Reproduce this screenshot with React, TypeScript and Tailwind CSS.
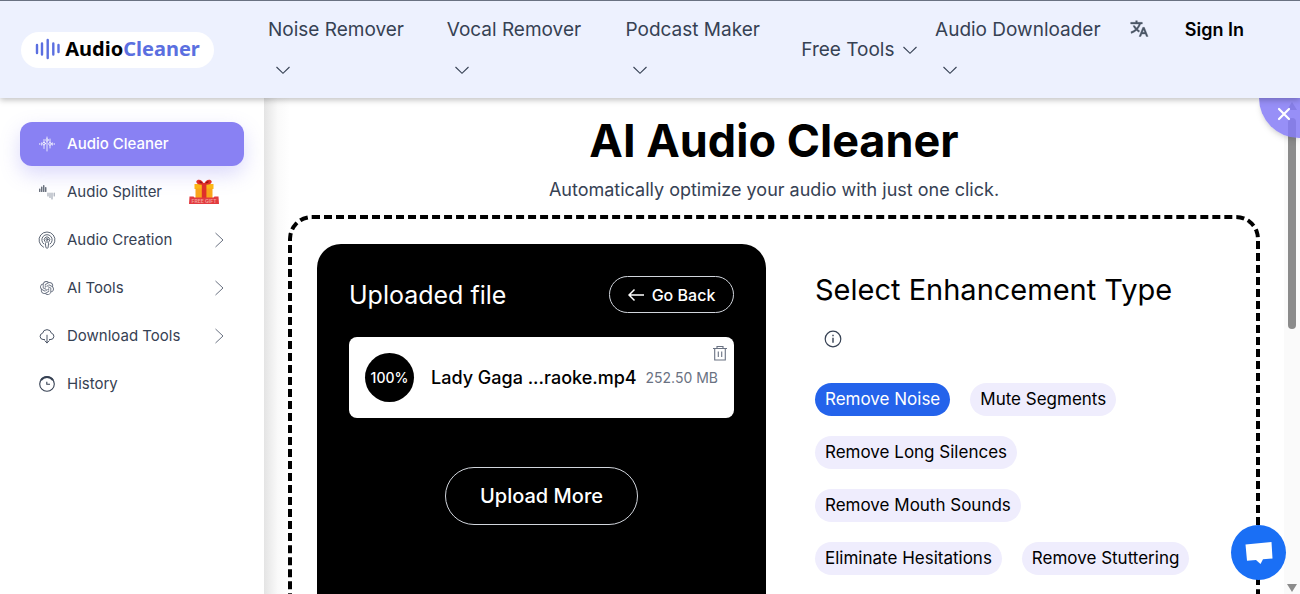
import React, { useState } from 'react';
import { RiTranslate2 } from 'react-icons/ri';
import { SiOpenai } from 'react-icons/si';

const navItems = [
  { label: 'Noise Remover', wrap: true },
  { label: 'Vocal Remover', wrap: true },
  { label: 'Podcast Maker', wrap: true },
  { label: 'Free Tools', wrap: false },
  { label: 'Audio Downloader', wrap: true },
];

const enhancementTypes = [
  'Remove Noise',
  'Mute Segments',
  'Remove Long Silences',
  'Remove Mouth Sounds',
  'Eliminate Hesitations',
  'Remove Stuttering',
];

const ChevronDown = () => (
  <svg className="w-4 h-4" viewBox="0 0 16 16" fill="none" stroke="currentColor" strokeWidth="1.1">
    <path d="M1.5 5 8 11.3 14.5 5" />
  </svg>
);

const ChevronRight = () => (
  <svg className="w-4 h-4 text-gray-500" viewBox="0 0 16 16" fill="none" stroke="currentColor" strokeWidth="1">
    <path d="M3.5 1 11 8 3.5 15" />
  </svg>
);

const LogoWave = () => (
  <svg className="w-[26px] h-6" viewBox="0 0 26 24" fill="none" stroke="#5b6fe0" strokeWidth="2.4" strokeLinecap="round">
    <path d="M2 8v8M7 6.5v11M12.7 3v18M18.3 6.5v11M23.5 8v7" />
  </svg>
);

const CleanerIcon = () => (
  <svg className="w-4 h-4" viewBox="0 0 16 16" fill="none" stroke="currentColor" strokeWidth="0.8" strokeLinecap="round">
    <path d="M.8 7.5v1M2.7 6.8v2.4M5 3.5v2.7M5 9v3.5M8 1v1.8M8 5.2V15M11 3v3.5M11 9.3v2.7M13.3 6.8v2.4M15.2 7.5v1" />
    <circle cx="5" cy="7.6" r="1.3" />
    <circle cx="8" cy="4" r="1.2" />
    <circle cx="11" cy="7.9" r="1.3" />
  </svg>
);

const SplitterIcon = () => (
  <svg className="w-4 h-4" viewBox="0 0 16 16" fill="none" strokeLinecap="round">
    <path d="M.8 5v2.5M2.8 3v4.5M4.8 1.5v6M6.8 3.5v4" stroke="#374151" strokeWidth="1.1" />
    <path d="M9 9v3M11 9v4.5M13 9v6M15.2 9v3" stroke="#9ca3af" strokeWidth="1.1" />
  </svg>
);

const CreationIcon = () => (
  <svg className="w-[18px] h-[18px]" viewBox="0 0 18 18" fill="none" stroke="currentColor" strokeWidth="0.8" strokeLinecap="round">
    <path d="M5.5 16.2a8 8 0 1 1 7 0" />
    <path d="M5.8 13a5.2 5.2 0 1 1 6.4 0" />
    <path d="M6.9 10.6a2.8 2.8 0 1 1 4.2 0" />
    <circle cx="9" cy="8.5" r="1" />
    <path d="M7.4 12.2c0-1.8 3.2-1.8 3.2 0l-.5 4.3c-.2 1.1-2 1.1-2.2 0z" />
  </svg>
);

const CloudIcon = () => (
  <svg className="w-4 h-4" viewBox="0 0 16 16" fill="none" stroke="currentColor" strokeWidth="0.9" strokeLinecap="round" strokeLinejoin="round">
    <path d="M5.5 11.5H4a3.2 3.2 0 0 1-.4-6.3 4.5 4.5 0 0 1 8.8 0 3.2 3.2 0 0 1-.4 6.3h-1.5" />
    <path d="M8 7.2v7.6M5.8 12.7 8 14.9l2.2-2.2" />
  </svg>
);

const HistoryIcon = () => (
  <svg className="w-4 h-4" viewBox="0 0 16 16" fill="none" stroke="currentColor" strokeWidth="1.1">
    <circle cx="8" cy="8" r="7.3" />
    <path d="M2 4.2a7.2 7.2 0 0 1 12 0" strokeWidth="1.9" />
    <path d="M7.8 5.8V8.2h3.2" />
  </svg>
);

const GiftIcon = () => (
  <svg className="w-[32px] h-[26px]" viewBox="0 0 32 26">
    <path d="M6.5 5h19v5h-19z" fill="#fbb615" />
    <path d="M7.5 9.5h17V20h-17z" fill="#f9a51a" />
    <path d="M13.8 4h4.6v16h-4.6z" fill="#df2f2a" />
    <path d="M16 5.5C12 6.5 8 5 8.3 2.5 9-.5 15 0 16 5.5zM16 5.5c4 1 8-.5 7.7-3C23-.5 17 0 16 5.5z" fill="#df2f2a" />
    <path d="M14.5 4.3c-2 0-3.5-.8-3.2-1.6.5-.9 2.6 0 3.2 1.6zM17.5 4.3c2 0 3.5-.8 3.2-1.6-.5-.9-2.6 0-3.2 1.6z" fill="#8f1414" />
    <path d="M1.5 17.5h4l1 1h19l1-1h4l.5 7.5H1z" fill="#e23a3f" />
    <text x="16" y="23.7" textAnchor="middle" fontSize="5" fontWeight="600" fill="#f3a39c" fontFamily="Inter, sans-serif">FREE GIFT</text>
  </svg>
);

const TrashIcon = () => (
  <svg className="w-4 h-4" viewBox="0 0 16 16" fill="none" stroke="currentColor" strokeWidth="1.1">
    <path d="M1 3.5h14M5 3.5v-2h6v2M2.7 3.5v11.5h10.6V3.5M6.3 6.5v5.5M9.7 6.5v5.5" />
  </svg>
);

const sidebarItems = [
  { label: 'Audio Cleaner', icon: <CleanerIcon /> },
  { label: 'Audio Splitter', icon: <SplitterIcon />, gift: true },
  { label: 'Audio Creation', icon: <CreationIcon />, expandable: true },
  { label: 'AI Tools', icon: <SiOpenai className="w-[14px] h-[14px] text-gray-500" />, expandable: true },
  { label: 'Download Tools', icon: <CloudIcon />, expandable: true },
  { label: 'History', icon: <HistoryIcon /> },
];

const Header = () => (
  <header className="relative z-20 flex h-[98px] shrink-0 items-center border-t border-gray-500 bg-[#edf1fe] pl-[21px] shadow-[0_2px_6px_rgba(0,0,0,0.25)]">
    <a href="#" className="flex h-9 w-[193px] shrink-0 items-center justify-center gap-1 rounded-full bg-white pb-[2px] font-['Noto_Sans'] text-xl font-bold text-black">
      <LogoWave />
      <span>
        Audio<span className="text-[#5b6fe0]">Cleaner</span>
      </span>
    </a>
    <nav className="ml-[54px] grid flex-1 grid-cols-[179fr_179fr_176fr_134fr_194fr] items-center text-[19px] text-gray-700">
      {navItems.map((item) => (
        <button
          key={item.label}
          className={item.wrap ? 'flex flex-col items-start' : 'flex items-center gap-2'}
        >
          <span className="leading-[41px] whitespace-nowrap">{item.label}</span>
          <span className={item.wrap ? 'flex h-[41px] items-center pl-[7px]' : ''}>
            <ChevronDown />
          </span>
        </button>
      ))}
    </nav>
    <div className="flex h-[82px] items-start pr-14">
      <button aria-label="Language" className="flex h-[41px] w-14 items-center text-gray-600">
        <RiTranslate2 className="h-5 w-5" stroke="currentColor" strokeWidth="0.4" />
      </button>
      <a href="#" className="text-lg leading-[41px] font-semibold whitespace-nowrap text-black">Sign In</a>
    </div>
  </header>
);

const Sidebar = () => {
  const [active, setActive] = useState('Audio Cleaner');

  return (
    <aside className="w-[264px] shrink-0 bg-white px-5 pt-6">
      <ul className="space-y-1">
        {sidebarItems.map((item) => (
          <li key={item.label}>
            <button
              onClick={() => setActive(item.label)}
              className={`flex h-11 w-full items-center rounded-xl pr-4 pl-[18px] text-left text-[15px] ${
                active === item.label
                  ? 'bg-[#8981f3] font-medium text-white shadow-[0_8px_20px_rgba(137,129,243,0.3)]'
                  : 'text-gray-700'
              }`}
            >
              <span className="flex w-[18px] justify-center">{item.icon}</span>
              <span className="ml-[11px] flex-1">{item.label}</span>
              {item.gift && (
                <span className="mr-2">
                  <GiftIcon />
                </span>
              )}
              {item.expandable && <ChevronRight />}
            </button>
          </li>
        ))}
      </ul>
    </aside>
  );
};

const UploadedFile = () => (
  <section className="min-h-[420px] rounded-3xl bg-black px-8 pt-8 text-white">
    <div className="flex items-center justify-between">
      <h2 className="text-[25px] leading-8">Uploaded file</h2>
      <button className="flex h-[37px] w-[125px] items-center justify-center gap-2 rounded-full border border-gray-300 text-base font-medium">
        <svg className="h-4 w-4" viewBox="0 0 16 16" fill="none" stroke="currentColor" strokeWidth="1.5">
          <path d="M16 8H1M6.5 2.5 1 8l5.5 5.5" />
        </svg>
        Go Back
      </button>
    </div>
    <div className="relative mt-6 flex h-[81px] items-center rounded-lg bg-white px-4 text-black">
      <span className="flex h-[49px] w-[49px] shrink-0 items-center justify-center rounded-full bg-black text-sm font-medium text-white">
        100%
      </span>
      <span className="ml-[17px] flex-1 text-lg font-medium whitespace-nowrap">Lady Gaga ...raoke.mp4</span>
      <span className="text-sm whitespace-nowrap text-gray-500">252.50 MB</span>
      <button aria-label="Delete" className="absolute top-2 right-[6px] text-gray-500">
        <TrashIcon />
      </button>
    </div>
    <div className="mt-[49px] flex justify-center">
      <button className="h-[58px] w-[193px] rounded-full border border-gray-300 text-xl font-medium">
        Upload More
      </button>
    </div>
  </section>
);

const EnhancementPanel = () => {
  const [selected, setSelected] = useState('Remove Noise');

  return (
    <section>
      <h2 className="pt-[21px] text-[29px] leading-[49px] whitespace-nowrap text-black">
        Select Enhancement Type
      </h2>
      <button aria-label="Info" className="flex h-[49px] items-center pl-[9px] text-gray-700">
        <svg className="h-[18px] w-[18px]" viewBox="0 0 18 18" fill="none" stroke="currentColor" strokeWidth="1.2">
          <circle cx="9" cy="9" r="7.8" />
          <path d="M9 7.8v5M9 4.8v1.5" strokeWidth="1.4" />
        </svg>
      </button>
      <div className="mt-5 flex flex-wrap gap-5 pr-6">
        {enhancementTypes.map((type) => (
          <button
            key={type}
            onClick={() => setSelected(type)}
            className={`h-[33px] rounded-full px-[10px] text-[17px] whitespace-nowrap ${
              selected === type ? 'bg-[#2463eb] text-white' : 'bg-[#efedfd] text-black'
            }`}
          >
            {type}
          </button>
        ))}
      </div>
    </section>
  );
};

const ScrollRail = () => (
  <div className="flex w-4 shrink-0 flex-col items-center bg-[#fafafa] pt-1 pb-[2px]">
    <svg className="h-2 w-[10px]" viewBox="0 0 10 8" fill="#8b8b8b">
      <path d="M5 0 10 8H0z" />
    </svg>
    <div className="mt-2 h-[211px] w-2 rounded-full bg-[#8b8b8b]" />
    <svg className="mt-auto h-2 w-[10px]" viewBox="0 0 10 8" fill="#8b8b8b">
      <path d="M0 0h10L5 8z" />
    </svg>
  </div>
);

const App: React.FC = () => {
  return (
    <div className="relative flex h-screen flex-col overflow-hidden bg-white font-['Inter',sans-serif]">
      <Header />
      <div className="flex min-h-0 flex-1">
        <Sidebar />
        <main className="min-w-0 flex-1 overflow-hidden bg-linear-to-r from-[#e4e4e4] via-[#fafafa] via-[14px] to-white to-[26px] px-6">
          <h1 className="pt-4 text-center text-[45px] leading-[54px] font-bold text-black">AI Audio Cleaner</h1>
          <p className="pt-2 pb-3 text-center text-lg leading-[27px] text-gray-700">
            Automatically optimize your audio with just one click.
          </p>
          <div className="grid grid-cols-[449fr_416fr] gap-[49px] rounded-3xl border-4 border-dashed border-black p-[25px]">
            <UploadedFile />
            <EnhancementPanel />
          </div>
        </main>
        <ScrollRail />
      </div>
      <button
        aria-label="Close"
        className="absolute top-[98px] right-0 z-10 flex h-10 w-[41px] items-start justify-end rounded-bl-full bg-[#857bf6]/85 pt-[9px] pr-[9px] text-white shadow-md"
      >
        <svg className="h-[14px] w-[14px]" viewBox="0 0 14 14" fill="none" stroke="currentColor" strokeWidth="2.2" strokeLinecap="round">
          <path d="M2 2l10 10M12 2 2 12" />
        </svg>
      </button>
      <button
        aria-label="Chat"
        className="absolute right-[14px] bottom-[14px] flex h-[55px] w-[55px] items-center justify-center rounded-full bg-[#1a6ff5]"
      >
        <svg className="h-6 w-7" viewBox="0 0 28 24" fill="white">
          <path d="M.5 3.5 26.5 1l1 16.5-9.5.8-2.5 4.7-4.5-4L2 19.8z" />
        </svg>
      </button>
    </div>
  );
};

export default App;
